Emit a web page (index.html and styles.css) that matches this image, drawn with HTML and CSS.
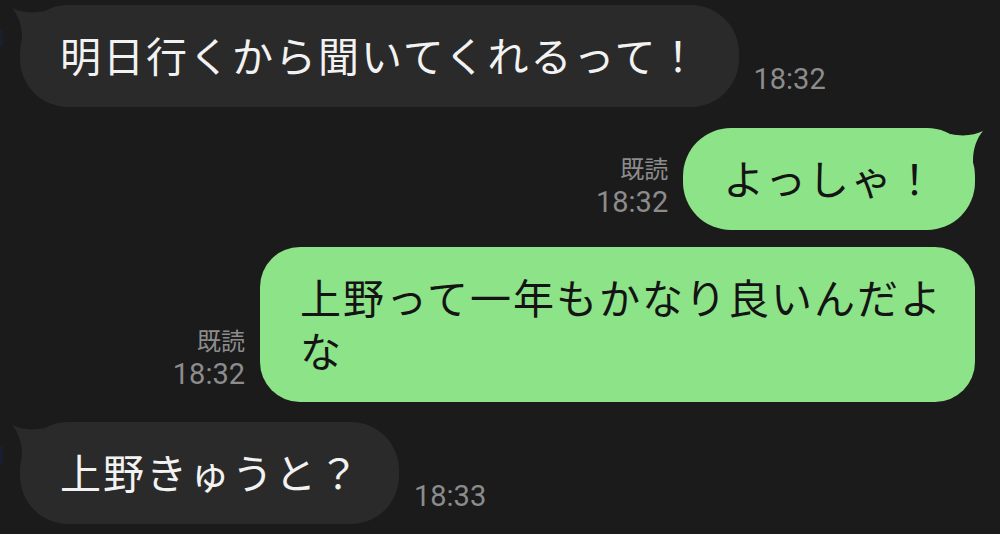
FILE: index.html
```html
<!DOCTYPE html>
<html lang="ja">
<head>
<meta charset="utf-8">
<title>Chat</title>
<link rel="stylesheet" href="styles.css">
</head>
<body>
<div class="chat">
  <div class="row in first">
    <div class="avatar-edge"></div>
    <div class="bubble dark pill">明日行くから聞いてくれるって！<svg class="tail tail-left" width="50" height="50" viewBox="0 0 50 50"><path d="M2,3 C10,7 22,9 34,6 L40,40 L12,40 L12,33 C12,20 8,10 2,3 Z"/></svg></div>
    <div class="meta"><span class="time">18:32</span></div>
  </div>
  <div class="row out second">
    <div class="meta"><span class="read">既読</span><span class="time">18:32</span></div>
    <div class="bubble green pill">よっしゃ！<svg class="tail tail-right" width="50" height="50" viewBox="0 0 50 50"><path d="M48,3 C40,7 28,9 16,6 L10,40 L38,40 L38,33 C38,20 42,10 48,3 Z"/></svg></div>
  </div>
  <div class="row out third">
    <div class="meta"><span class="read">既読</span><span class="time">18:32</span></div>
    <div class="bubble green multi">上野って一年もかなり良いんだよな</div>
  </div>
  <div class="row in fourth">
    <div class="avatar-edge"></div>
    <div class="bubble dark pill">上野きゅうと？<svg class="tail tail-left" width="50" height="50" viewBox="0 0 50 50"><path d="M2,3 C10,7 22,9 34,6 L40,40 L12,40 L12,33 C12,20 8,10 2,3 Z"/></svg></div>
    <div class="meta"><span class="time">18:33</span></div>
  </div>
</div>
</body>
</html>
```
FILE: styles.css
```css
html, body {
  margin: 0;
  padding: 0;
  background: #1b1b1b;
}
body {
  width: 1000px;
  height: 534px;
  overflow: hidden;
  font-family: "Noto Sans CJK JP", "Noto Sans", sans-serif;
}
.chat {
  display: flex;
  flex-direction: column;
  padding-top: 5px;
}
.row {
  display: flex;
  align-items: flex-end;
}
.row.in {
  justify-content: flex-start;
}
.row.out {
  justify-content: flex-end;
  padding-right: 25px;
}
.second { margin-top: 21px; }
.third { margin-top: 17px; }
.fourth { margin-top: 20px; }

.avatar-edge {
  align-self: flex-start;
  width: 3px;
  height: 18px;
  margin-top: 24px;
  margin-right: 17px;
  background: #1a1f30;
  border-radius: 0 2px 2px 0;
}
.bubble {
  position: relative;
  box-sizing: border-box;
  padding: 23px 38px 26px 40px;
  font-size: 41px;
  letter-spacing: 2px;
  line-height: 53px;
  white-space: normal;
}
.bubble.pill {
  border-radius: 48px;
  white-space: nowrap;
}
.bubble.multi {
  border-radius: 40px;
  max-width: 715px;
  padding-right: 30px;
}
.bubble.dark {
  background: #2a2a2a;
  color: #f2f2f2;
}
.bubble.green {
  background: #8de388;
  color: #141414;
}
.tail {
  position: absolute;
  top: 0;
}
.tail-left {
  left: -10px;
  fill: #2a2a2a;
}
.tail-right {
  right: -10px;
  fill: #8de388;
}
.meta {
  display: flex;
  flex-direction: column;
  margin-bottom: 11px;
  color: #8c8c8c;
}
.row.in .meta {
  margin-left: 15px;
  align-items: flex-start;
}
.row.out .meta {
  margin-right: 15px;
  align-items: flex-end;
}
.read {
  font-family: "Noto Sans CJK JP", sans-serif;
  font-size: 24px;
  line-height: 34px;
}
.time {
  font-family: Roboto, "Liberation Sans", sans-serif;
  font-size: 29px;
  line-height: 34px;
}
```
